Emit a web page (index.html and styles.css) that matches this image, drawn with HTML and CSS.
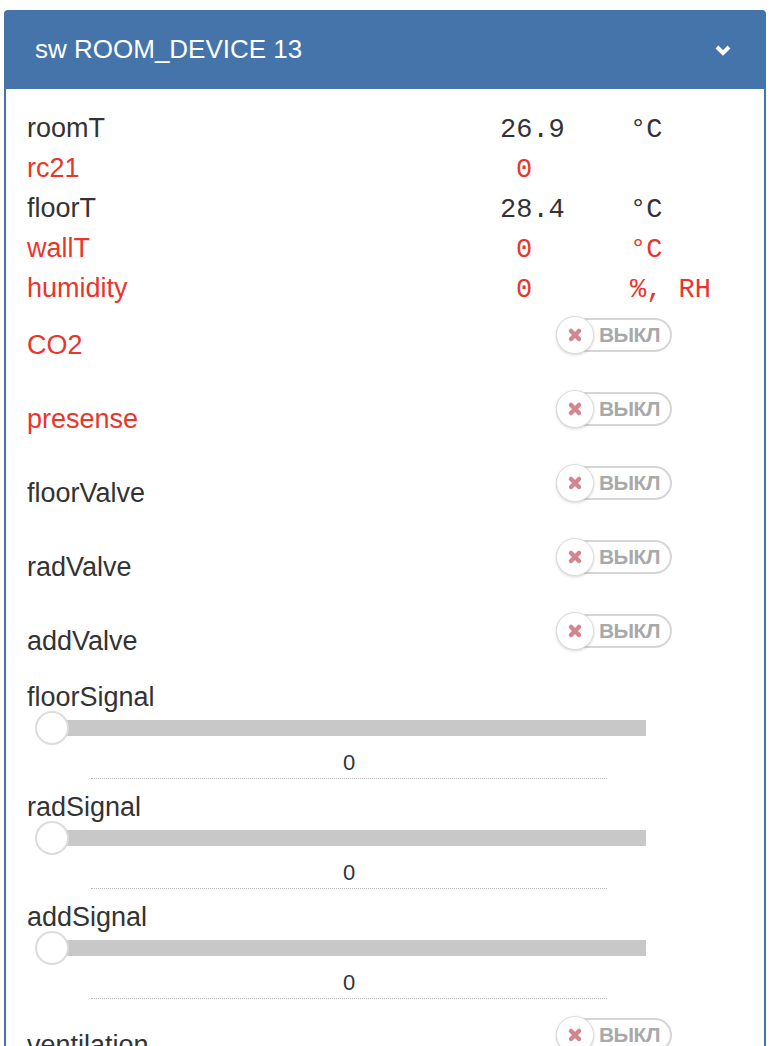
FILE: index.html
```html
<!DOCTYPE html>
<html>
<head>
	<title>sw ROOM_DEVICE 13</title>
	<link rel="stylesheet" href="styles.css">
</head>
<body>
	<div class="panel">
		<div class="panel-head">
			<span class="title">sw ROOM_DEVICE 13</span>
			<svg class="chevron" width="16" height="12" viewBox="0 0 16 12">
				<polyline points="2,3 8,9 14,3" fill="none" stroke="#fff" stroke-width="4"/>
			</svg>
		</div>
		<div class="panel-body">
			<div class="readings">
				<span class="name">roomT</span><span class="val">26.9</span><span class="unit">°C</span>
				<span class="name alarm">rc21</span><span class="val alarm pad">0</span><span class="unit"></span>
				<span class="name">floorT</span><span class="val">28.4</span><span class="unit">°C</span>
				<span class="name alarm">wallT</span><span class="val alarm pad">0</span><span class="unit alarm">°C</span>
				<span class="name alarm">humidity</span><span class="val alarm pad">0</span><span class="unit alarm">%, RH</span>
			</div>

			<div class="switch-row">
				<span class="name alarm">CO2</span>
				<div class="toggle"><span class="knob"><svg width="16" height="16" viewBox="0 0 16 16"><path d="M4 4L12 12M12 4L4 12" stroke="#d4868f" stroke-width="4.5" stroke-linecap="round"/></svg></span><span class="state">ВЫКЛ</span></div>
			</div>
			<div class="switch-row">
				<span class="name alarm">presense</span>
				<div class="toggle"><span class="knob"><svg width="16" height="16" viewBox="0 0 16 16"><path d="M4 4L12 12M12 4L4 12" stroke="#d4868f" stroke-width="4.5" stroke-linecap="round"/></svg></span><span class="state">ВЫКЛ</span></div>
			</div>
			<div class="switch-row">
				<span class="name">floorValve</span>
				<div class="toggle"><span class="knob"><svg width="16" height="16" viewBox="0 0 16 16"><path d="M4 4L12 12M12 4L4 12" stroke="#d4868f" stroke-width="4.5" stroke-linecap="round"/></svg></span><span class="state">ВЫКЛ</span></div>
			</div>
			<div class="switch-row">
				<span class="name">radValve</span>
				<div class="toggle"><span class="knob"><svg width="16" height="16" viewBox="0 0 16 16"><path d="M4 4L12 12M12 4L4 12" stroke="#d4868f" stroke-width="4.5" stroke-linecap="round"/></svg></span><span class="state">ВЫКЛ</span></div>
			</div>
			<div class="switch-row">
				<span class="name">addValve</span>
				<div class="toggle"><span class="knob"><svg width="16" height="16" viewBox="0 0 16 16"><path d="M4 4L12 12M12 4L4 12" stroke="#d4868f" stroke-width="4.5" stroke-linecap="round"/></svg></span><span class="state">ВЫКЛ</span></div>
			</div>

			<div class="signal">
				<div class="sig-name">floorSignal</div>
				<div class="slider"><div class="track"></div><span class="thumb"></span></div>
				<div class="sig-val">0</div>
			</div>
			<div class="signal">
				<div class="sig-name">radSignal</div>
				<div class="slider"><div class="track"></div><span class="thumb"></span></div>
				<div class="sig-val">0</div>
			</div>
			<div class="signal">
				<div class="sig-name">addSignal</div>
				<div class="slider"><div class="track"></div><span class="thumb"></span></div>
				<div class="sig-val">0</div>
			</div>

			<div class="switch-row">
				<span class="name">ventilation</span>
				<div class="toggle"><span class="knob"><svg width="16" height="16" viewBox="0 0 16 16"><path d="M4 4L12 12M12 4L4 12" stroke="#d4868f" stroke-width="4.5" stroke-linecap="round"/></svg></span><span class="state">ВЫКЛ</span></div>
			</div>
		</div>
	</div>
</body>
</html>
```

FILE: styles.css
```css
body {
	margin: 0;
	background: #fff;
	color: #333;
	font-family: "Liberation Sans", Arial, sans-serif;
}
.panel {
	margin: 10px 4px 0 4px;
}
.panel-head {
	display: flex;
	align-items: center;
	justify-content: space-between;
	height: 79px;
	padding: 0 35px 0 31px;
	background: #4574ab;
	border-radius: 4px 4px 0 0;
	color: #fff;
}
.title {
	font-size: 26px;
}
.chevron {
	display: block;
}
.panel-body {
	border: 2px solid #4574ab;
	border-top: none;
	padding: 19px 0 0 21px;
	height: 1000px;
}
.readings {
	display: grid;
	grid-template-columns: 473px 130px 1fr;
	grid-auto-rows: 40px;
	align-items: baseline;
	line-height: 40px;
}
.name {
	font-size: 27px;
}
.val, .unit {
	font-family: "Liberation Mono", "Courier New", monospace;
	font-size: 27px;
}
.val.pad {
	padding-left: 16px;
}
.alarm {
	color: #e8362c;
}
.switch-row {
	display: flex;
	align-items: flex-start;
	height: 74px;
	box-sizing: border-box;
	padding-top: 10px;
}
.switch-row .name {
	flex: none;
	width: 529px;
	margin-top: 10px;
	line-height: 34px;
}
.toggle {
	display: flex;
	align-items: center;
	width: 116px;
	height: 34px;
	box-sizing: border-box;
	border: 2px solid #d6d6d6;
	border-radius: 17px;
	background: #fff;
}
.knob {
	flex: none;
	display: flex;
	align-items: center;
	justify-content: center;
	width: 38px;
	height: 38px;
	box-sizing: border-box;
	margin-left: -2px;
	border: 1px solid #dedede;
	border-radius: 50%;
	background: #fff;
	box-shadow: 0 1px 3px rgba(0, 0, 0, 0.18);
}
.state {
	margin-left: 5px;
	font-size: 21px;
	font-weight: bold;
	letter-spacing: -0.6px;
	color: #a9a9a9;
}
.signal {
	padding-top: 4px;
}
.sig-name {
	font-size: 27px;
	line-height: 30px;
}
.slider {
	position: relative;
	display: flex;
	align-items: center;
	width: 611px;
	height: 34px;
	margin: -1px 0 0 8px;
}
.track {
	flex: 1;
	height: 16px;
	margin-left: 17px;
	background: #c8c8c8;
}
.thumb {
	position: absolute;
	left: 0;
	top: 0;
	width: 34px;
	height: 34px;
	box-sizing: border-box;
	border: 2px solid #dcdcdc;
	border-radius: 50%;
	background: #fff;
}
.sig-val {
	width: 516px;
	margin: 6px 0 9px 64px;
	padding-bottom: 3px;
	border-bottom: 1px dotted #b8b8b8;
	text-align: center;
	font-size: 22px;
	line-height: 24px;
}
```
